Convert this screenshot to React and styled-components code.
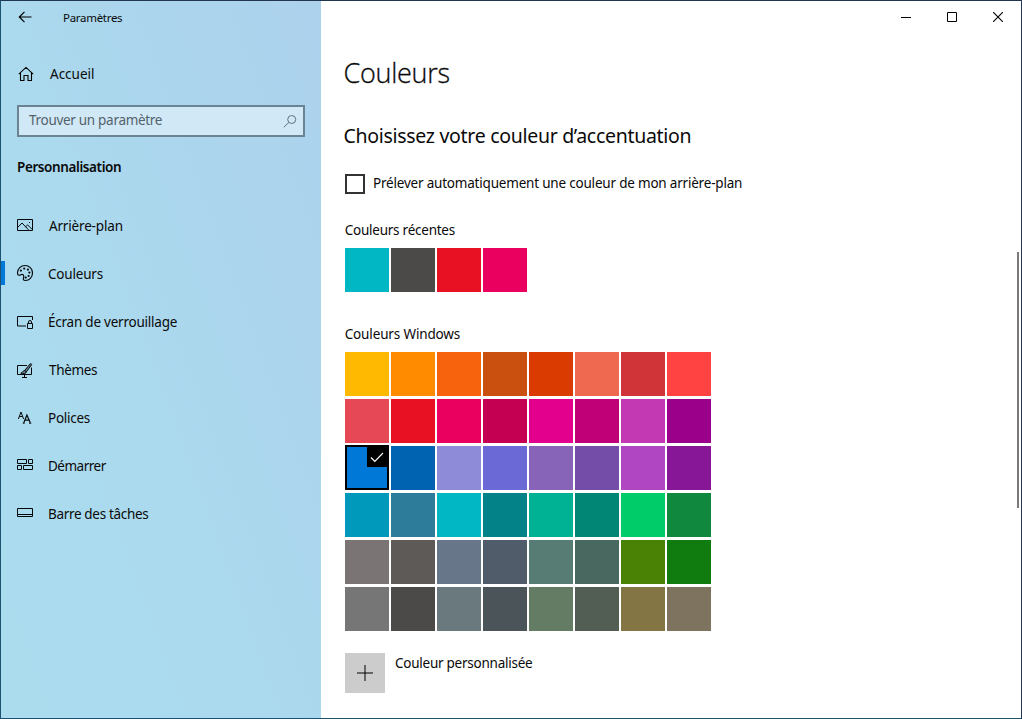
import React from "react";
import styled, { createGlobalStyle } from "styled-components";

const GlobalStyle = createGlobalStyle`
  * { box-sizing: border-box; }
  body { margin: 0; }
  button { padding: 0; border: 0; background: none; font: inherit; color: inherit; }
`;

const Window = styled.div`
  display: flex;
  width: 1022px;
  height: 719px;
  border: 1px solid #1b5272;
  border-top-color: #22374f;
  border-right-color: #22375c;
  background: #fff;
  color: #0a0a0a;
  font: 13.5px/20px "Noto Sans", "Open Sans", sans-serif;
  overflow: hidden;
`;

const Label = styled.span`
  letter-spacing: ${(p) => p.$track ?? -0.2}px;
  white-space: nowrap;
`;

/* Navigation pane */
const Sidebar = styled.aside`
  display: flex;
  flex-direction: column;
  width: 320px;
  flex-shrink: 0;
  background: linear-gradient(70deg, #aadcee 0%, #abdaee 38%, #abd6ed 65%, #add2ed 100%);
`;

const TitleBar = styled.header`
  display: flex;
  align-items: center;
  height: 32px;
  padding: 0 0 0 17px;
  gap: 30px;
  font-size: 11.5px;
`;

const AppName = styled(Label)`
  padding-top: 1px;
`;

const HomeLink = styled.div`
  display: flex;
  align-items: center;
  gap: 16px;
  height: 20px;
  margin: 31px 0 0 17px;
`;

const SearchBox = styled.div`
  display: flex;
  align-items: center;
  justify-content: space-between;
  width: 288px;
  height: 32px;
  margin: 21px 0 0 16px;
  padding: 0 6px 0 10px;
  border: 2px solid #6a8493;
  background: #d1e8f6;
  color: #53636c;
`;

const SearchHint = styled.div`
  display: flex;
  margin-top: -2px;
`;

const Category = styled.h2`
  margin: 20px 0 0 16px;
  font-size: 13.5px;
  line-height: 20px;
  font-weight: 600;
`;

const NavList = styled.nav`
  display: flex;
  flex-direction: column;
  margin-top: 25px;
`;

const NavItem = styled.div`
  display: flex;
  align-items: center;
  height: 48px;
  padding-left: ${(p) => (p.$active ? 0 : 16)}px;
`;

const ActiveMark = styled.i`
  align-self: flex-start;
  width: 4px;
  height: 24px;
  margin: 11px 12px 0 0;
  background: #0078d7;
`;

const NavIcon = styled.svg`
  width: 16px;
  height: 18px;
  margin-right: ${(p) => p.$space ?? 15}px;
  fill: none;
  stroke: #05080a;
  overflow: visible;
`;

const Glyph = styled.svg`
  display: block;
  width: ${(p) => p.$size}px;
  height: ${(p) => p.$size}px;
  fill: none;
  stroke: ${(p) => p.$color ?? "#000"};
`;

/* Content pane */
const Main = styled.main`
  display: flex;
  flex-direction: column;
  flex: 1;
`;

const Caption = styled.div`
  display: flex;
  justify-content: flex-end;
  height: 32px;
`;

const CaptionButton = styled.button`
  display: grid;
  place-items: center;
  width: 46px;
  height: 32px;
`;

const Body = styled.div`
  display: flex;
  justify-content: space-between;
  flex: 1;
`;

const Content = styled.div`
  display: flex;
  flex-direction: column;
  padding: 22px 0 0 24px;
`;

const PageTitle = styled.h1`
  margin: 0 0 0 -1.5px;
  font: 300 27px/36px "Open Sans", "Noto Sans", sans-serif;
  -webkit-text-stroke: 0.3px #0a0a0a;
`;

const SectionTitle = styled.h2`
  margin: 32px 0 0 -1.5px;
  font-size: 19.5px;
  line-height: 26px;
  font-weight: 400;
`;

const CheckRow = styled.label`
  display: flex;
  gap: 8px;
  height: 20px;
  margin-top: 25px;
`;

const CheckBox = styled.span`
  width: 20px;
  height: 20px;
  border: 2px solid #333;
`;

const CheckText = styled.div`
  margin-top: -1px;
`;

const GroupTitle = styled.h3`
  margin: ${(p) => p.$top}px 0 8px -0.3px;
  font-size: 13.5px;
  line-height: 20px;
  font-weight: 400;
`;

const SwatchGrid = styled.div`
  display: grid;
  grid-template-columns: repeat(${(p) => p.$columns}, 44px);
  grid-auto-rows: 44px;
  gap: 3px 2px;
`;

const Swatch = styled.button`
  display: flex;
  justify-content: flex-end;
  background: ${(p) => p.$color};
  ${(p) =>
    p.$selected &&
    `
    height: 45px;
    margin-top: -1px;
    border: 2px solid #000;
  `}
`;

const SelectedBadge = styled.span`
  width: 20px;
  height: 20px;
  background: #000;
`;

const CustomRow = styled.div`
  display: flex;
  gap: 10px;
  margin-top: 22px;
`;

const AddButton = styled.button`
  display: grid;
  place-items: center;
  width: 40px;
  height: 40px;
  background: #ccc;
`;

const ScrollThumb = styled.div`
  width: 2px;
  height: 256px;
  margin: 219px 2px 0 0;
  background: #7a7a7a;
`;

const recent = ["#00b7c3", "#4c4a48", "#e81123", "#ea005e"];

const palette = [
  "#ffb900", "#ff8c00", "#f7630c", "#ca5010", "#da3b01", "#ef6950", "#d13438", "#ff4343",
  "#e74856", "#e81123", "#ea005e", "#c30052", "#e3008c", "#bf0077", "#c239b3", "#9a0089",
  "#0078d7", "#0063b1", "#8e8cd8", "#6b69d6", "#8764b8", "#744da9", "#b146c2", "#881798",
  "#0099bc", "#2d7d9a", "#00b7c3", "#038387", "#00b294", "#018574", "#00cc6a", "#10893e",
  "#7a7574", "#5d5a58", "#68768a", "#515c6b", "#567c73", "#486860", "#498205", "#107c10",
  "#767676", "#4c4a48", "#69797e", "#4a5459", "#647c64", "#525e54", "#847545", "#7e735f",
];
const selectedColor = "#0078d7";

const icons = {
  picture: (
    <>
      <path d="M.5 2.5h15v11H.5z" />
      <path d="M.8 10.2 5 6l6.5 6.8M8.6 9.8l2-1.9 4.7 4.7" />
      <path d="M12 5h1v1h-1z" fill="#0b0f12" stroke="none" />
    </>
  ),
  palette: (
    <>
      <path
        d="M8 .5c4.2 0 7.5 3.3 7.5 7.4 0 4.3-3.2 7.6-7 7.6-2.3 0-2.5-1.1-2-2.6.6-1.7.3-3.4-1.3-3.5-1.6-.1-2.3 1.1-3.3.9C.9 10.1.5 9.2.5 7.9.5 3.8 3.8.5 8 .5z"
        strokeWidth="1.15"
      />
      <g fill="#05080a" stroke="none">
        <circle cx="3.9" cy="5.6" r="1.1" />
        <circle cx="7.2" cy="3.6" r="1.1" />
        <circle cx="10.9" cy="4.6" r="1.1" />
        <circle cx="12.4" cy="7.6" r="1.1" />
        <circle cx="11.6" cy="11" r="1.1" />
        <circle cx="8.7" cy="12.6" r="1.1" />
      </g>
    </>
  ),
  lock: (
    <>
      <path d="M15.5 7V3.5H.5V13H9" />
      <path d="M10.5 10.5h5v5h-5zM11.5 10.500V9a1.500 1.500 0 0 1 3 0v1.500" />
    </>
  ),
  theme: (
    <>
      <path d="M10 4.500H.5v9h14V6.500M7.500 13.500v3M5 16.500h5" />
      <path
        d="M7.600 9.500 13.200 2.900c.6-.7 1.800.2 1.300 1L9.300 10.900M7.600 9.500c-1.800-.1-1.800 2.300-3.800 2.600 2.400 1 5.400.8 5.500-1.200z"
        fill="#5d7a88"
      />
    </>
  ),
  fonts: (
    <>
      <path d="M1.400 10 4 3l2.600 7M2.400 7.500h3.200" />
      <path d="M6.700 14 9.900 6l3.500 8M7.900 11.200h4.400" strokeWidth="1.200" />
      <path d="M5.700 14.300h2M12 14.300h2.300" strokeWidth=".8" />
    </>
  ),
  start: <path d="M.5 2.500h9v4h-9zM11.500 2.500h4v4h-4zM.5 8.500h4v4h-4zM6.500 8.500h9v4h-9z" />,
  taskbar: <path d="M.5 3.500h15v8H.5zM.5 9.500h15" />,
};

const navigation = [
  { icon: "picture", text: "Arrière-plan", track: -0.17, space: 16 },
  { icon: "palette", text: "Couleurs", active: true },
  { icon: "lock", text: "Écran de verrouillage", track: -0.23 },
  { icon: "theme", text: "Thèmes", track: -0.33, space: 16 },
  { icon: "fonts", text: "Polices", track: -0.27 },
  { icon: "start", text: "Démarrer", track: -0.5 },
  { icon: "taskbar", text: "Barre des tâches", track: -0.33 },
];

export default function App() {
  return (
    <>
      <GlobalStyle />
      <Window>
        <Sidebar>
          <TitleBar>
            <Glyph $size={15} viewBox="0 0 15 15">
              <path d="M1.500 7h12M6.500 1.800 1.300 7l5.200 5.200" strokeWidth="1.200" />
            </Glyph>
            <AppName $track={-0.3}>Paramètres</AppName>
          </TitleBar>
          <HomeLink>
            <Glyph $size={16} viewBox="0 0 16 16">
              <path d="M.8 8.200 8 1.400l7.200 6.800M2.500 7v7.500h3.500v-5h4v5h3.500V7" strokeWidth="1.100" />
            </Glyph>
            <Label $track={0}>Accueil</Label>
          </HomeLink>
          <SearchBox>
            <SearchHint>
              <Label $track={-0.3}>Trouver un paramètre</Label>
            </SearchHint>
            <Glyph $size={14} viewBox="0 0 14 14" $color="#5f717b">
              <circle cx="8.700" cy="5.500" r="4" />
              <path d="M5.800 8.400.8 13.300" />
            </Glyph>
          </SearchBox>
          <Category>
            <Label $track={-0.4}>Personnalisation</Label>
          </Category>
          <NavList>
            {navigation.map((item) => (
              <NavItem key={item.text} $active={item.active}>
                {item.active && <ActiveMark />}
                <NavIcon viewBox="0 0 16 18" $space={item.space}>
                  {icons[item.icon]}
                </NavIcon>
                <Label $track={item.track}>{item.text}</Label>
              </NavItem>
            ))}
          </NavList>
        </Sidebar>
        <Main>
          <Caption>
            <CaptionButton aria-label="Réduire">
              <Glyph $size={10} viewBox="0 0 10 10"><path d="M0 5.500h10" /></Glyph>
            </CaptionButton>
            <CaptionButton aria-label="Agrandir">
              <Glyph $size={10} viewBox="0 0 10 10"><path d="M.5.5h9v9h-9z" /></Glyph>
            </CaptionButton>
            <CaptionButton aria-label="Fermer">
              <Glyph $size={10} viewBox="0 0 10 10"><path d="m0 0 10 10M10 0 0 10" strokeWidth="1.100" /></Glyph>
            </CaptionButton>
          </Caption>
          <Body>
            <Content>
              <PageTitle><Label $track={-0.28}>Couleurs</Label></PageTitle>
              <SectionTitle>
                <Label $track={-0.3}>Choisissez votre couleur d’accentuation</Label>
              </SectionTitle>
              <CheckRow>
                <CheckBox />
                <CheckText>
                  <Label>Prélever automatiquement une couleur de mon arrière-plan</Label>
                </CheckText>
              </CheckRow>
              <GroupTitle $top={26}><Label $track={-0.24}>Couleurs récentes</Label></GroupTitle>
              <SwatchGrid $columns={4}>
                {recent.map((color) => <Swatch key={color} $color={color} />)}
              </SwatchGrid>
              <GroupTitle $top={32}><Label $track={-0.14}>Couleurs Windows</Label></GroupTitle>
              <SwatchGrid $columns={8}>
                {palette.map((color) => (
                  <Swatch key={color} $color={color} $selected={color === selectedColor}>
                    {color === selectedColor && (
                      <SelectedBadge>
                        <Glyph $size={20} viewBox="0 0 20 20" $color="#fff">
                          <path d="m4 10.500 3.800 3.800L16 6" strokeWidth="1.200" />
                        </Glyph>
                      </SelectedBadge>
                    )}
                  </Swatch>
                ))}
              </SwatchGrid>
              <CustomRow>
                <AddButton aria-label="Ajouter">
                  <Glyph $size={16} viewBox="0 0 16 16">
                    <path d="M0 8h16M8 0v16" />
                  </Glyph>
                </AddButton>
                <Label $track={-0.25}>Couleur personnalisée</Label>
              </CustomRow>
            </Content>
            <ScrollThumb />
          </Body>
        </Main>
      </Window>
    </>
  );
}
